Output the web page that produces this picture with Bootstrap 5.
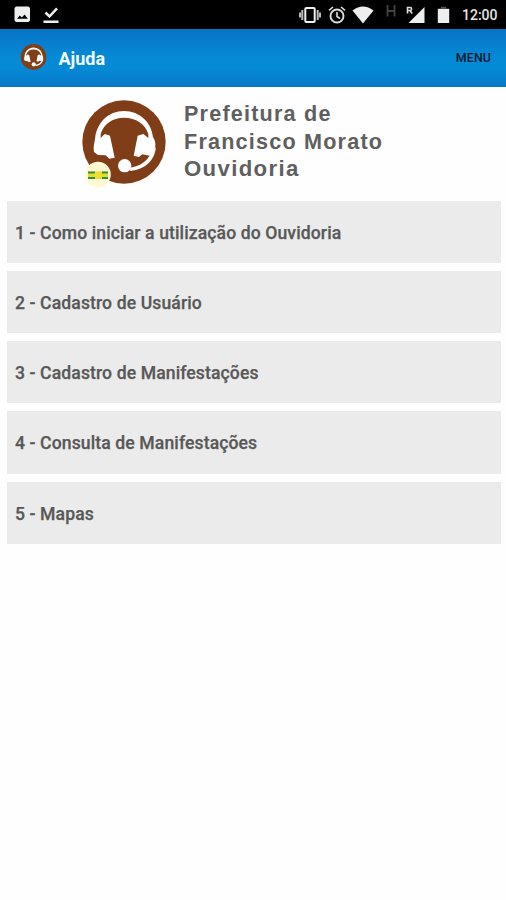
<!DOCTYPE html>
<html lang="pt-BR">
<head>
<meta charset="utf-8">
<meta name="viewport" content="width=device-width, initial-scale=1">
<title>Ajuda</title>
<link href="https://cdn.jsdelivr.net/npm/bootstrap@5.3.0/dist/css/bootstrap.min.css" rel="stylesheet">
<style>
body{font-family:Roboto,"Liberation Sans",sans-serif;background:#fefefe;min-height:900px}
svg{display:block;flex:none}
.status-bar{height:29px;background:#000;padding:0 8px 0 14px;color:#e4e4e4}
.status-time{font-size:14px;font-weight:500;line-height:29px;margin-left:12px;padding-top:1px;width:36px;white-space:nowrap}
.app-bar{height:57.5px;padding:0 15px 0 20px;background:linear-gradient(#0874c6,#058ad6 50%,#058ad6 68%,#0878c8)}
.app-title{font-size:18px;font-weight:700;color:#f2faff;line-height:24px;margin-left:11.5px;padding-top:2px}
.menu-btn{font-size:12.4px;font-weight:500;color:#06192b;letter-spacing:.1px;line-height:20px;padding-top:1px}
.brand-area{height:114px;padding:11px 0 0 82px}
.brand-name{font-family:"Liberation Sans",Arial,sans-serif;font-weight:700;font-size:21.6px;line-height:27.5px;color:#5f5f5f;letter-spacing:1.2px;margin:2.500px 0 0 16px}
.brand-dept{font-size:22.2px;letter-spacing:1.35px}
.help-list{padding:0 5px 0 7px;gap:7.9px}
.help-item{height:62.4px;background:#ebebeb;color:#585858;font-size:17.6px;font-weight:500;letter-spacing:.1px;padding:2px 8px 0;-webkit-text-stroke:.25px #585858}
</style>
<script src="https://cdn.jsdelivr.net/npm/bootstrap@5.3.0/dist/js/bootstrap.bundle.min.js"></script>
</head>
<body>
<svg width="0" height="0" class="position-absolute" aria-hidden="true">
  <symbol id="headset" viewBox="0 0 252 252">
    <circle cx="126" cy="126" r="125" fill="#803e18"/>
    <path fill="#fff" d="M36 156C33 142 37 130 39 117C44 68 79 33 126 33C174 33 209 68 213 112C222 124 223 142 214 154L203 167L181 163L171 171L155 167L167 107L184 102L199 114L199 102C190 72 162 53 126 53C91 53 65 72 56 102L56 114L68 102L84 107L98 173L82 176L71 166L48 165Z"/>
    <path fill="#fff" d="M222 140C219 178 193 208 145 213L143 203C174 199 195 184 208 158Z"/>
    <circle cx="128" cy="197" r="20" fill="#fff"/>
  </symbol>
</svg>

<div class="status-bar d-flex align-items-center">
  <svg width="17" height="17" viewBox="0 0 17 17"><path fill="#eee" fill-rule="evenodd" d="M2 .5h12.500L16 2v12.500L14.500 16H2L.5 14.500V2ZM3 12.800h10.800L10.600 8.500 7.900 11.600 5.800 9.500Z"/></svg>
  <svg width="17" height="18" viewBox="0 0 17 18" style="margin-left:12px"><path d="M2.500 6.500 6.500 10.500 14 2.300" fill="none" stroke="#eee" stroke-width="2.500"/><path d="M.5 14.500h15v2.500H.5Z" fill="#eee"/></svg>
  <svg class="ms-auto" width="22" height="18" viewBox="0 0 22 18"><rect x="6.300" y="2" width="9.400" height="14" rx="1" fill="none" stroke="#eee" stroke-width="2"/><path d="M3.300 4v10M18.700 4v10M1 6.500v5M21 6.500v5" stroke="#bbb" stroke-width="2"/></svg>
  <svg width="18" height="18" viewBox="0 0 18 18" style="margin-left:7px"><circle cx="9" cy="10" r="6.500" fill="none" stroke="#ddd" stroke-width="1.900"/><path d="M1 4.300 5 1M17 4.300 13 1M9 6v4.500l3 2" fill="none" stroke="#ddd" stroke-width="1.600"/></svg>
  <svg width="22" height="18" viewBox="0 0 22 18" style="margin-left:6px"><path d="M.5 4.500Q11-3.500 21.500 4.500L11 17.500Z" fill="#eee"/></svg>
  <svg width="10" height="20" viewBox="0 0 10 20" style="margin-left:12px"><path d="M1.500 0v11.500M8.500 0v11.500M1.500 6h7" stroke="#444" stroke-width="1.800"/></svg>
  <svg width="19" height="18" viewBox="0 0 19 18" style="margin-left:10px"><path d="M18.500 1v16H2.500Z" fill="#eee"/><path d="M0 0h8v8H0Z" fill="#000"/><path d="M1.500 7.500V1.500h2.600a1.500 1.500 0 0 1 0 3H1.500M4 4.500l2.200 3" fill="none" stroke="#ddd" stroke-width="1.600"/></svg>
  <svg width="13" height="18" viewBox="0 0 13 18" style="margin-left:12px"><path d="M.8 2.800h11.400V17H.8Z" fill="#eee"/><path d="M4 .8h5v2H4Z" fill="#555"/></svg>
  <div class="status-time">12:00</div>
</div>

<header class="app-bar d-flex align-items-center">
  <svg width="27" height="27" viewBox="0 0 27 27"><use href="#headset" x=".5" y="0" width="26" height="26"/></svg>
  <h1 class="app-title mb-0">Ajuda</h1>
  <a href="#" class="menu-btn ms-auto text-decoration-none">MENU</a>
</header>

<main>
  <section class="brand-area d-flex align-items-start">
    <svg width="86" height="90" viewBox="0 0 86 90">
      <use href="#headset" x="0" y="2" width="84" height="84"/>
      <circle cx="16" cy="76.500" r="12.800" fill="#fff8d2"/>
      <path d="M6 73.500h20v7.500H6Z" fill="#e4dc27"/>
      <path d="M6 73.500h7v2H6ZM20 73.500h6v2h-6ZM6 79h7v2H6ZM20 79h6v2h-6Z" fill="#2b9348"/>
      <circle cx="16" cy="77.200" r="3.600" fill="#f1dc38"/>
    </svg>
    <div class="brand-name">Prefeitura de<br>Francisco Morato<br><span class="brand-dept">Ouvidoria</span></div>
  </section>
  <nav class="help-list d-flex flex-column">
    <a href="#" class="help-item d-flex align-items-center text-decoration-none">1 - Como iniciar a utilização do Ouvidoria</a>
    <a href="#" class="help-item d-flex align-items-center text-decoration-none">2 - Cadastro de Usuário</a>
    <a href="#" class="help-item d-flex align-items-center text-decoration-none">3 - Cadastro de Manifestações</a>
    <a href="#" class="help-item d-flex align-items-center text-decoration-none">4 - Consulta de Manifestações</a>
    <a href="#" class="help-item d-flex align-items-center text-decoration-none">5 - Mapas</a>
  </nav>
</main>
</body>
</html>
